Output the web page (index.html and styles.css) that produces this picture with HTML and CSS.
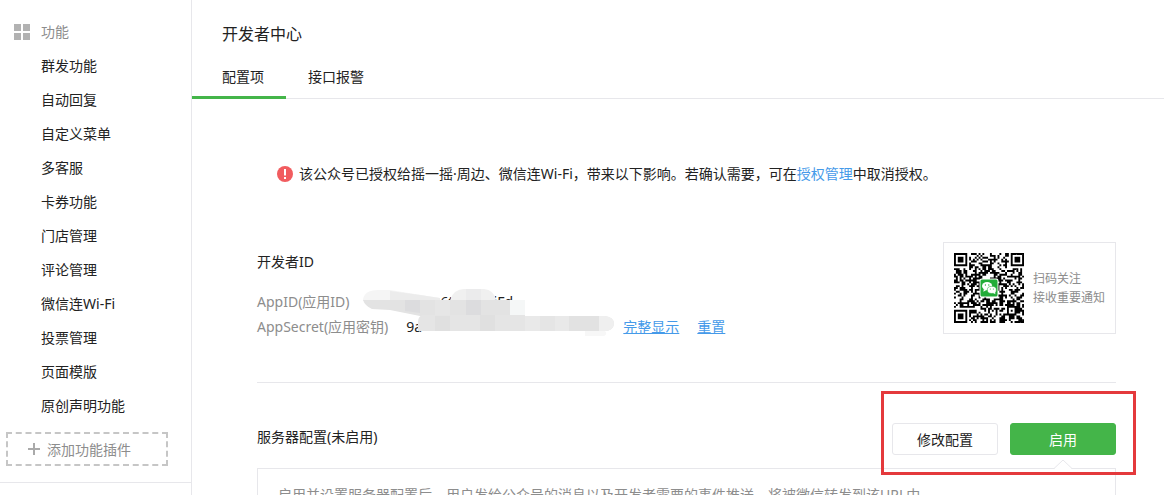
FILE: index.html
```
<!DOCTYPE html>
<html lang="zh-CN">
<head>
    <meta charset="UTF-8">
    <meta name="viewport" content="width=device-width, initial-scale=1.0">
    <title>开发者中心</title>
    <link rel="stylesheet" href="styles.css">
</head>
<body>

<!-- Sidebar -->
<nav class="sidebar">
    <div class="menu">
        <div class="menu-title">
            <svg class="menu-icon" width="16" height="16" viewBox="0 0 16 16">
                <path d="M0 0h7v7H0zM9 0h7v7H9zM0 9h7v7H0zM9 9h7v7H9z" fill="#b2b2b2"/>
            </svg>
            <span>功能</span>
        </div>
        <ul class="menu-list">
            <li><a href="#">群发功能</a></li>
            <li><a href="#">自动回复</a></li>
            <li><a href="#">自定义菜单</a></li>
            <li><a href="#">多客服</a></li>
            <li><a href="#">卡券功能</a></li>
            <li><a href="#">门店管理</a></li>
            <li><a href="#">评论管理</a></li>
            <li><a href="#">微信连Wi-Fi</a></li>
            <li><a href="#">投票管理</a></li>
            <li><a href="#">页面模版</a></li>
            <li><a href="#">原创声明功能</a></li>
        </ul>
        <button type="button" class="add-plugin">
            <svg width="12" height="12" viewBox="0 0 12 12">
                <path d="M5 0h2v5h5v2H7v5H5V7H0V5h5z" fill="#aaa"/>
            </svg>
            添加功能插件
        </button>
    </div>
</nav>

<!-- Main -->
<main class="main">
    <h1 class="page-title">开发者中心</h1>
    <div class="tabs">
        <a href="#" class="tab active">配置项</a>
        <a href="#" class="tab">接口报警</a>
    </div>

    <div class="content">
        <div class="notice">
            <svg width="16" height="16" viewBox="0 0 16 16">
                <circle cx="8" cy="8" r="8" fill="#f15c5f"/>
                <path d="M7 3h2v6.500H7zM7 11h2v2H7z" fill="#fff"/>
            </svg>
            <p>该公众号已授权给摇一摇·周边、微信连Wi-Fi，带来以下影响。若确认需要，可在<a href="#">授权管理</a>中取消授权。</p>
        </div>

        <section class="developer">
            <div class="developer-info">
                <h2>开发者ID</h2>
                <div class="credentials">
                    <div class="row">
                        <span class="label">AppID(应用ID)</span>
                        <span class="app-id"><span>6t</span><span>iFd</span></span>
                    </div>
                    <div class="row">
                        <span class="label">AppSecret(应用密钥)</span>
                        <span class="secret">9a</span>
                        <a href="#">完整显示</a>
                        <a href="#">重置</a>
                    </div>
                    <!-- Mosaic over the private values -->
                    <svg class="mosaic" width="260" height="54" viewBox="0 0 260 54">
                        <path d="M3 14Q4 4 18 4H30L80 12V15H3z" fill="#f5f5f5"/>
                        <path d="M30 5L60 9L80 12V15H30z" fill="#ececec"/>
                        <path d="M90 14Q94 3 104 3H124Q134 4 136 14z" fill="#f0f0f0"/>
                        <path d="M106 3h15v11h-15z" fill="#ebebec"/>
                        <path d="M3 14H150V29L60 30L30 24L12 23Q5 20 3 14z" fill="#e3e3e3"/>
                        <path d="M45 14h15v13l-15-2zM106 14h15v15h-15z" fill="#dcdcde"/>
                        <path d="M75 14h15v15H75z" fill="#e6e6e6"/>
                        <path d="M150 14h15v15h-15z" fill="#f5f7f7"/>
                        <path d="M62 29H165V30H245Q254 31 254 38Q253 45 245 45H58V36Q58 31 62 29z" fill="#e5e5e5"/>
                        <path d="M75 30h15v15H75zM120 29h15v16h-15z" fill="#e0e0e0"/>
                        <path d="M165 30h15v15h-15zM195 30h14v15h-14z" fill="#e9e9e9"/>
                        <path d="M209 30h30v15h-30z" fill="#e2e2e2"/>
                        <path d="M225 45h20Q248 48 244 50H225z" fill="#f7f7f7"/>
                        <path d="M239 30h6Q254 31 254 38Q253 45 245 45h-6z" fill="#efefef"/>
                    </svg>
                </div>
            </div>
            <div class="qr-card">
                <svg class="qr" width="70" height="70" viewBox="0 0 37 37">
                    <path id="qrModules" d="" fill="#000"/>
                    <rect x="13.500" y="13.500" width="10" height="10" rx="1" fill="#fff"/>
                    <rect x="14" y="14" width="9" height="9" rx="0.800" fill="#22ac38"/>
                    <ellipse cx="17.500" cy="17.500" rx="2.700" ry="2.200" fill="#fff"/>
                    <path d="M15.800 19l-.3 1.500 1.700-.9z" fill="#fff"/>
                    <ellipse cx="20" cy="19.500" rx="2.400" ry="1.900" fill="#fff" stroke="#22ac38" stroke-width=".3"/>
                    <path d="M20.500 21l1.400.8-.3-1.300z" fill="#fff"/>
                    <g fill="#22ac38">
                        <circle cx="16.600" cy="16.900" r=".35"/>
                        <circle cx="18.400" cy="16.900" r=".35"/>
                        <circle cx="19.200" cy="19" r=".3"/>
                        <circle cx="20.800" cy="19" r=".3"/>
                    </g>
                </svg>
                <p>扫码关注<br>接收重要通知</p>
            </div>
        </section>

        <section class="server">
            <div class="server-head">
                <h2>服务器配置(未启用)</h2>
                <div class="actions">
                    <button type="button" class="btn">修改配置</button>
                    <button type="button" class="btn btn-primary">启用</button>
                    <div class="highlight"></div>
                </div>
            </div>
            <div class="tips">
                <svg class="tips-arrow" width="18" height="10" viewBox="0 0 18 10">
                    <path d="M0 10L9 1L18 10z" fill="#fff"/>
                    <path d="M0 9.500L9 1L18 9.500" fill="none" stroke="#e7e7eb"/>
                </svg>
                启用并设置服务器配置后，用户发给公众号的消息以及开发者需要的事件推送，将被微信转发到该URL中
            </div>
        </section>
    </div>
</main>

<script src="script.js"></script>
</body>
</html>
```
FILE: styles.css
```
* {
    box-sizing: border-box;
}

body {
    display: flex;
    height: 100vh;
    margin: 0;
    overflow: hidden;
    background: #fff;
    color: #222;
    font-family: "Noto Sans", "Noto Sans CJK SC", sans-serif;
    font-size: 14px;
}

h1, h2, p, ul {
    margin: 0;
    padding: 0;
    font-weight: 400;
}

a {
    color: #459ae9;
    text-decoration: none;
}

button {
    font-family: inherit;
    font-size: 14px;
    cursor: pointer;
}

/* Sidebar */
.sidebar {
    flex: 0 0 192px;
    border-right: 1px solid #e7e7eb;
}

.menu {
    padding: 15px 0 16px;
    border-bottom: 1px solid #e7e7eb;
}

.menu-title {
    display: flex;
    align-items: center;
    gap: 11px;
    padding-left: 14px;
    line-height: 34px;
    color: #8d8d8d;
}

.menu-list {
    list-style: none;
    line-height: 34px;
}

.menu-list a {
    display: block;
    padding-left: 41px;
    color: #222;
}

.add-plugin {
    display: flex;
    align-items: center;
    gap: 7px;
    width: 162px;
    height: 34px;
    margin: 9px 0 0 6px;
    padding: 0 20px;
    border: 2px dashed #c6c6c6;
    background: #fff;
    color: #8d8d8d;
}

/* Header and tabs */
.main {
    flex: 1;
    min-width: 0;
}

.page-title {
    padding: 18px 30px 0;
    font-size: 16px;
    line-height: 32px;
}

.tabs {
    display: flex;
    margin-top: 6px;
    border-bottom: 1px solid #e7e7eb;
}

.tab {
    height: 43px;
    margin-bottom: -1px;
    padding: 0 22px;
    color: #222;
    line-height: 42px;
}

.tab.active {
    padding-left: 30px;
    border-bottom: 3px solid #44b549;
}

/* Content */
.content {
    padding: 63px 48px 0 65px;
}

.notice {
    display: flex;
    align-items: center;
    gap: 6px;
    padding-left: 20px;
    line-height: 24px;
}

.developer {
    display: flex;
    align-items: flex-start;
    justify-content: space-between;
    margin-top: 56px;
    padding-bottom: 43px;
    border-bottom: 1px solid #e7e7eb;
}

.developer h2 {
    font-size: 14px;
    line-height: 40px;
}

.credentials {
    position: relative;
    margin-top: 7px;
    line-height: 25px;
}

.row {
    display: flex;
}

.label {
    color: #8d8d8d;
}

.row a {
    margin-right: 18px;
    text-decoration: underline;
}

.app-id {
    display: flex;
    gap: 40px;
    margin-left: 91px;
}

.secret {
    width: 217px;
    margin-left: 18px;
}

.mosaic {
    position: absolute;
    top: -3px;
    left: 103px;
}

.qr-card {
    display: flex;
    align-items: center;
    gap: 9px;
    height: 92px;
    padding: 0 10px;
    border: 1px solid #e7e7eb;
    color: #8d8d8d;
    font-size: 12px;
    line-height: 19px;
}

/* Server settings */
.server-head {
    display: flex;
    align-items: flex-start;
    justify-content: space-between;
    padding: 40px 0 13px;
}

.server-head h2 {
    font-size: 14px;
    line-height: 28px;
}

.actions {
    position: relative;
    display: flex;
    gap: 12px;
}

.btn {
    width: 106px;
    height: 32px;
    padding: 0;
    border: 1px solid #e7e7eb;
    border-radius: 3px;
    background: #fff;
    color: #222;
}

.btn-primary {
    border-color: #44b549;
    background: #44b549;
    color: #fff;
}

/* Red frame around the buttons */
.highlight {
    position: absolute;
    z-index: 1;
    top: -32px;
    right: -20px;
    bottom: -20px;
    left: -11px;
    border: 3px solid #e4393c;
    pointer-events: none;
}

.tips {
    position: relative;
    padding: 14px 20px;
    border: 1px solid #e7e7eb;
    color: #8d8d8d;
    line-height: 24px;
}

.tips-arrow {
    position: absolute;
    top: -10px;
    right: 43px;
}
```
FILE: script.js
```
// Builds the QR code modules on a 37x37 grid
var size = 37;
var seed = 20150;
var d = '';

function random() {
    seed = (seed * 1103515245 + 12345) % 2147483648;
    return seed / 2147483648;
}

// Square rings: dark border, light ring, dark centre
function ring(x, y, cx, cy, radius) {
    var dist = Math.max(Math.abs(x - cx), Math.abs(y - cy));
    if (dist > radius) return null;
    if (radius === 4) return dist === 3 || dist < 2;
    return dist !== 1;
}

for (var y = 0; y < size; y++) {
    for (var x = 0; x < size; x++) {
        var dark = random() < 0.54;
        var marks = [
            ring(x, y, 3, 3, 4),
            ring(x, y, 33, 3, 4),
            ring(x, y, 3, 33, 4),
            ring(x, y, 30, 30, 2)
        ];
        for (var i = 0; i < marks.length; i++) {
            if (marks[i] !== null) dark = marks[i];
        }
        if (dark) d += 'M' + x + ' ' + y + 'h1v1h-1z';
    }
}

document.getElementById('qrModules').setAttribute('d', d);
```
